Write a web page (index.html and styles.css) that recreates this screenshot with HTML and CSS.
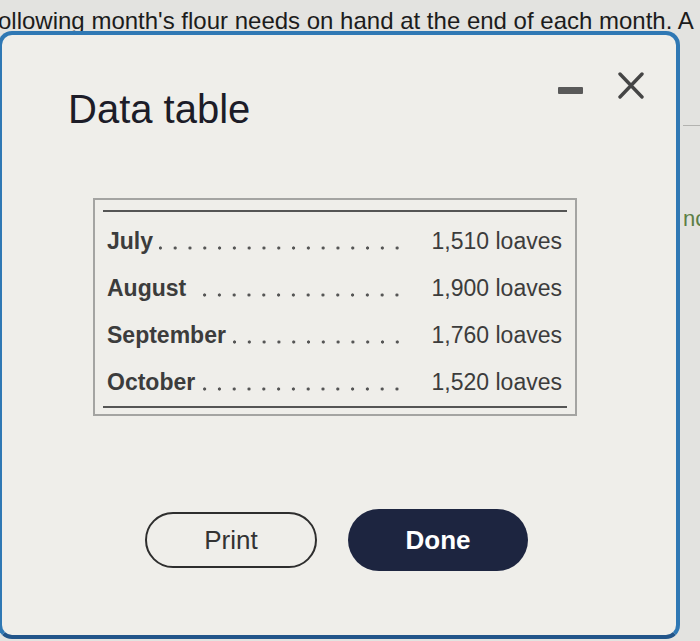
FILE: index.html
```html
<!DOCTYPE html>
<html lang="en">
<head>
<meta charset="utf-8">
<title>Data table</title>
<link rel="stylesheet" href="styles.css">
</head>
<body>
<p class="intro">ollowing month's flour needs on hand at the end of each month. A</p>
<div class="stage">
  <section class="dialog">
    <header class="dialog-header">
      <h2 class="dialog-title">Data table</h2>
      <div class="controls">
        <span class="minimize" aria-label="Minimize"></span>
        <svg class="close" width="26" height="27" viewBox="0 0 26 27" aria-label="Close">
          <path d="M2 2 L24 25 M24 2 L2 25" stroke="#454545" stroke-width="3.4" stroke-linecap="round" fill="none"/>
        </svg>
      </div>
    </header>
    <div class="dialog-body">
      <div class="table-box">
        <div class="table-inner">
          <div class="row"><span class="label">July</span><span class="dots"></span><span class="value">1,510 loaves</span></div>
          <div class="row"><span class="label">August</span><span class="dots"></span><span class="value">1,900 loaves</span></div>
          <div class="row"><span class="label">September</span><span class="dots"></span><span class="value">1,760 loaves</span></div>
          <div class="row"><span class="label">October</span><span class="dots"></span><span class="value">1,520 loaves</span></div>
        </div>
      </div>
      <div class="actions">
        <button class="btn btn-print" type="button">Print</button>
        <button class="btn btn-done" type="button">Done</button>
      </div>
    </div>
  </section>
  <aside class="side">
    <div class="side-rule"></div>
    <span class="side-text">nc</span>
  </aside>
</div>
</body>
</html>
```
FILE: styles.css
```css
html, body {
  margin: 0;
  padding: 0;
}
body {
  width: 700px;
  height: 641px;
  overflow: hidden;
  background: #e3e3e0;
  font-family: "Liberation Sans", Arial, sans-serif;
  padding-top: 6px;
  box-sizing: border-box;
}
.intro {
  margin: 0 0 0 -2px;
  font-size: 24px;
  line-height: 30px;
  color: #1c1c1c;
  white-space: nowrap;
}
.stage {
  display: flex;
  margin-top: -5px;
  margin-left: -2px;
}
.dialog {
  position: relative;
  flex: none;
  box-sizing: border-box;
  width: 682px;
  height: 608px;
  border: 4px solid #2f78b4;
  border-bottom-color: #22558a;
  border-radius: 14px;
  background: #efeeea;
  padding: 37px 32px 0 66px;
}
.dialog-header {
  display: flex;
  justify-content: space-between;
  align-items: flex-start;
}
.dialog-title {
  margin: 14px 0 0;
  font-size: 40px;
  line-height: 46px;
  font-weight: 400;
  color: #1c1c28;
}
.controls {
  display: flex;
  align-items: flex-start;
  gap: 35px;
}
.minimize {
  display: block;
  width: 25px;
  height: 7px;
  margin-top: 15px;
  background: #595959;
  border-radius: 1px;
}
.close {
  display: block;
}
.dialog-body {
  margin-left: 25px;
  width: 484px;
}
.table-box {
  margin-top: 66px;
  box-sizing: border-box;
  width: 484px;
  border: 2px solid #a4a4a2;
  padding: 10px 8px 6px;
}
.table-inner {
  border-top: 2px solid #555;
  border-bottom: 2px solid #555;
  padding-top: 6px;
}
.row {
  display: flex;
  align-items: center;
  height: 47px;
  padding: 0 5px 0 4px;
  font-size: 23px;
  color: #3c3c3c;
}
.label {
  font-weight: 700;
}
.dots {
  flex: 1;
  height: 4px;
  margin: 12px 27px 0 6px;
  background-image: radial-gradient(circle at center, #555 1.3px, transparent 1.9px);
  background-size: 14.8px 4px;
  background-repeat: repeat-x;
  background-position: right center;
}
.value {
  white-space: nowrap;
}
.actions {
  display: flex;
  justify-content: center;
  align-items: center;
  gap: 31px;
  height: 62px;
  margin-top: 93px;
  padding-left: 3px;
}
.btn {
  font-family: "Liberation Sans", Arial, sans-serif;
  font-size: 26px;
  box-sizing: border-box;
  cursor: pointer;
}
.btn-print {
  width: 172px;
  height: 56px;
  border: 2px solid #2e2e2e;
  border-radius: 28px;
  background: transparent;
  color: #333;
}
.btn-done {
  width: 180px;
  height: 62px;
  border: none;
  border-radius: 31px;
  background: #1d2540;
  color: #fff;
  font-weight: 700;
}
.side {
  flex: 1;
  padding-left: 3px;
}
.side-rule {
  margin-top: 94px;
  height: 1px;
  background: #b3b3b0;
}
.side-text {
  display: block;
  margin-top: 80px;
  font-size: 22px;
  line-height: 26px;
  color: #5d7f46;
  white-space: nowrap;
}
```
